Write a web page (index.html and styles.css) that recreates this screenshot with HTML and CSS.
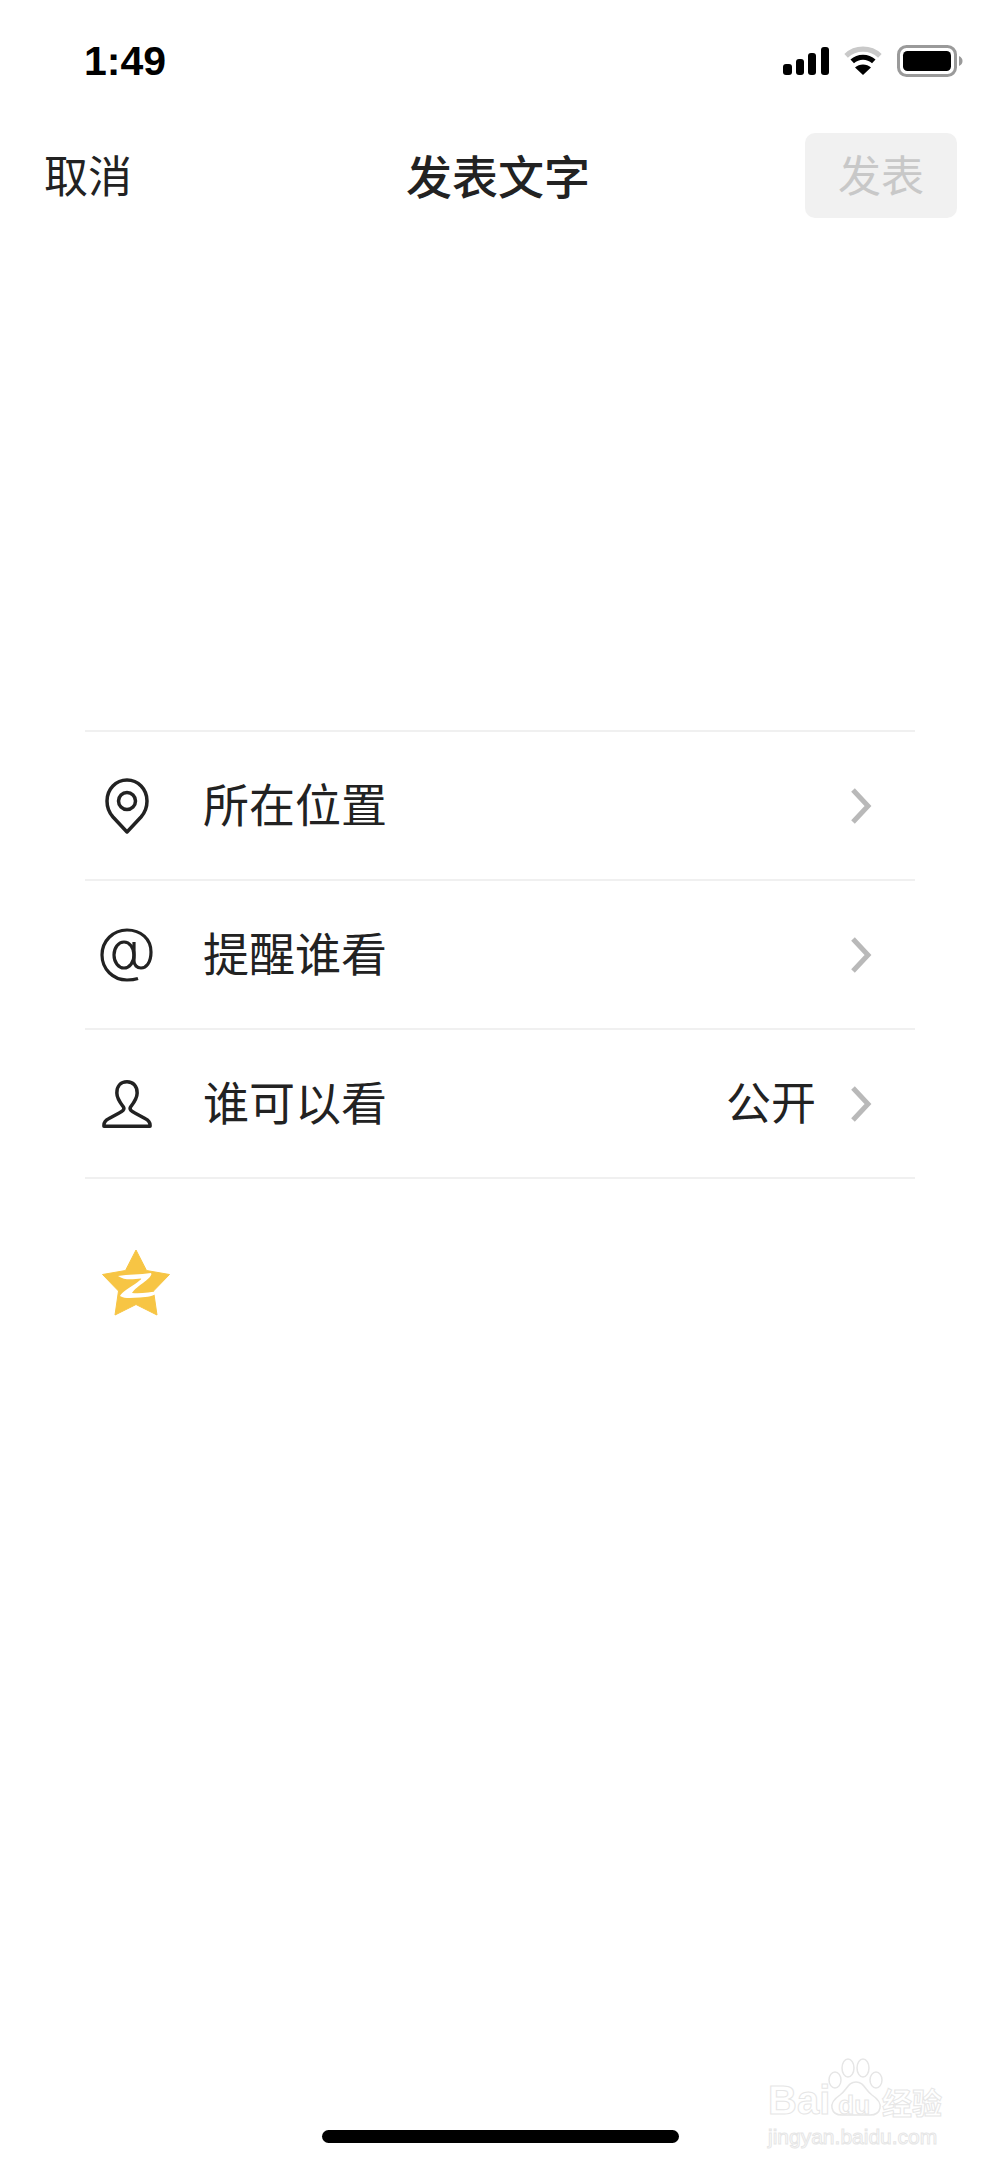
FILE: index.html
```html
<!DOCTYPE html>
<html lang="zh-CN">
<head>
    <meta charset="UTF-8">
    <title>发表文字</title>
    <link rel="stylesheet" href="styles.css">
</head>
<body>
    <div class="page">
        <div class="status-bar">
            <span class="time">1:49</span>
            <div class="status-icons">
                <svg class="signal" width="46" height="28" viewBox="0 0 46 28">
                    <rect x="0" y="17" width="9" height="11" rx="3"/>
                    <rect x="13" y="12" width="8" height="16" rx="3"/>
                    <rect x="25" y="6" width="8" height="22" rx="3"/>
                    <rect x="38" y="0" width="8" height="28" rx="3"/>
                </svg>
                <svg class="wifi" width="40" height="30" viewBox="0 0 42 32">
                    <path d="M3 10.500C13 1 29 1 39 10.500" fill="none" stroke="#c9c9c9" stroke-width="5.500"/>
                    <path d="M9.500 16.500C16 10.500 26 10.500 32.500 16.500" fill="none" stroke="#000" stroke-width="5.500"/>
                    <path d="M21 31L12.500 23C17 18.500 25 18.500 29.500 23Z" fill="#000"/>
                </svg>
                <svg class="battery" width="66" height="32" viewBox="0 0 66 32">
                    <rect x="1.500" y="1.500" width="57" height="29" rx="8" fill="none" stroke="#9a9a9a" stroke-width="3"/>
                    <rect x="6" y="6" width="48" height="20" rx="4.500" fill="#000"/>
                    <path d="M62 11C64.500 12 65.500 14 65.500 16C65.500 18 64.500 20 62 21Z" fill="#9a9a9a"/>
                </svg>
            </div>
        </div>

        <div class="nav-bar">
            <span class="nav-cancel">取消</span>
            <span class="nav-title">发表文字</span>
            <button class="nav-publish">发表</button>
        </div>

        <ul class="option-list">
            <li class="option-row">
                <span class="option-icon">
                    <svg width="44" height="56" viewBox="0 0 44 56" fill="none" stroke="#222" stroke-width="3.500">
                        <path d="M22 54L8 39C4 34.500 2 29 2 23C2 11 11 2 22 2C33 2 42 11 42 23C42 29 40 34.500 36 39Z" stroke-linejoin="round"/>
                        <circle cx="22" cy="23" r="8.500"/>
                    </svg>
                </span>
                <span class="option-label">所在位置</span>
                <svg class="chevron" width="22" height="36" viewBox="0 0 22 36"><path d="M3 2L18 18L3 34"/></svg>
            </li>
            <li class="option-row">
                <span class="option-icon">
                    <svg width="54" height="54" viewBox="0 0 54 54" fill="none" stroke="#222" stroke-width="3.200">
                        <path d="M38 50.500C35 51.500 31 52 27 52C13 52 2 41 2 27C2 13 13 2 27 2C41 2 51 11 51 24C51 35 46 40 41 40C37 40 34 37 34 33V14"/>
                        <ellipse cx="24" cy="27" rx="10" ry="13"/>
                    </svg>
                </span>
                <span class="option-label">提醒谁看</span>
                <svg class="chevron" width="22" height="36" viewBox="0 0 22 36"><path d="M3 2L18 18L3 34"/></svg>
            </li>
            <li class="option-row">
                <span class="option-icon">
                    <svg width="50" height="48" viewBox="0 0 54 52" fill="none" stroke="#222" stroke-width="3.800">
                        <path d="M27 2C20 2 16 7 16 14C16 20 20 25 23 29C25 32 22 34 18 36L7 42C3 44 2 46 2 49V50H52V49C52 46 51 44 47 42L36 36C32 34 29 32 31 29C34 25 38 20 38 14C38 7 34 2 27 2Z" stroke-linejoin="round"/>
                    </svg>
                </span>
                <span class="option-label">谁可以看</span>
                <span class="option-value">公开</span>
                <svg class="chevron" width="22" height="36" viewBox="0 0 22 36"><path d="M3 2L18 18L3 34"/></svg>
            </li>
        </ul>

        <div class="share-row">
            <svg width="68" height="66" viewBox="0 0 68 66">
                <path d="M34 0L44.500 20.500L67.500 24.500L51.500 41L55 65L34 54.500L13 65L16.500 41L0.500 24.500L23.500 20.500Z" fill="#f7c544" stroke="#f7c544" stroke-linejoin="round"/>
                <path d="M16 26C26 24 38 25 49 23C51 25 45 30 41 33C35 37 31 41 30 43C39 44 48 42 57 41C52 47 45 47 38 47.500C30 48 23 49 18 46C20 42 27 38 33 34C37 31 40 29 39 28.500C32 29 23 31 16 26Z" fill="#fff"/>
            </svg>
        </div>

        <div class="home-indicator"></div>

        <div class="watermark">
            <svg class="watermark-paw" width="56" height="58" viewBox="0 0 56 58" fill="#fff" stroke="#e6e6e6" stroke-width="1.500">
                <ellipse cx="7" cy="22" rx="6" ry="8"/>
                <ellipse cx="20" cy="10" rx="6" ry="9"/>
                <ellipse cx="35" cy="10" rx="6" ry="9"/>
                <ellipse cx="48" cy="22" rx="6" ry="8"/>
                <path d="M28 24C20 24 19 32 12 37C6 41 3 45 4 50C5 55 9 57 14 57H42C47 57 51 55 52 50C53 45 50 41 44 37C37 32 36 24 28 24Z"/>
            </svg>
            <div class="watermark-top">
                <span>Bai</span>
                <span class="watermark-du">du</span>
                <span class="watermark-cn">经验</span>
            </div>
            <div class="watermark-url">jingyan.baidu.com</div>
        </div>
    </div>
</body>
</html>
```
FILE: styles.css
```css
* {
    box-sizing: border-box;
}

body {
    margin: 0;
    background-color: #fff;
    font-family: "Liberation Sans", "Noto Sans CJK SC", sans-serif;
    color: #222;
}

.page {
    position: relative;
    height: 2165px;
    overflow: hidden;
}

/* status bar */
.status-bar {
    display: flex;
    justify-content: space-between;
    align-items: center;
    height: 60px;
    margin-top: 31px;
    padding: 0 37px 0 84px;
}

.time {
    font-size: 41px;
    font-weight: bold;
    color: #000;
}

.status-icons {
    display: flex;
    align-items: center;
    gap: 14px;
}

.signal {
    fill: #000;
}

/* nav */
.nav-bar {
    display: flex;
    justify-content: space-between;
    align-items: center;
    height: 85px;
    margin-top: 42px;
    padding: 0 43px 0 44px;
    position: relative;
}

.nav-cancel {
    font-size: 44px;
    line-height: 1;
    padding-top: 4px;
}

.nav-title {
    font-size: 46px;
    font-weight: 500;
    line-height: 1;
    padding-top: 4px;
    position: absolute;
    left: 406px;
}

.nav-publish {
    width: 152px;
    height: 85px;
    border: none;
    border-radius: 10px;
    background-color: #f1f1f1;
    color: #c8c8c8;
    font-family: inherit;
    font-size: 43px;
    line-height: 1;
    padding: 4px 0 0;
}

/* options */
.option-list {
    list-style: none;
    margin: 512px 85px 0;
    padding: 0;
    border-top: 2px solid #f0f0f0;
}

.option-row {
    display: flex;
    align-items: center;
    height: 149px;
    padding-right: 43px;
    border-bottom: 2px solid #f0f0f0;
}

.option-icon {
    display: flex;
    justify-content: center;
    width: 84px;
    margin-right: 34px;
}

.option-label {
    font-size: 46px;
    line-height: 1;
    padding-top: 1px;
    flex-grow: 1;
}

.option-value {
    font-size: 45px;
    line-height: 1;
    padding-top: 1px;
    margin-right: 34px;
}

.chevron {
    fill: none;
    stroke: #b9b9b9;
    stroke-width: 5;
}

.share-row {
    margin: 71px 0 0 102px;
}

.home-indicator {
    position: absolute;
    left: 322px;
    top: 2130px;
    width: 357px;
    height: 13px;
    border-radius: 7px;
    background-color: #000;
}

/* watermark sits over the page */
.watermark {
    position: absolute;
    left: 768px;
    top: 2056px;
    width: 190px;
    color: #fff;
    -webkit-text-stroke: 1px #e6e6e6;
}

.watermark-paw {
    position: absolute;
    left: 60px;
    top: 2px;
}

.watermark-top {
    position: relative;
    display: flex;
    align-items: baseline;
    padding-top: 25px;
    font-size: 40px;
    font-weight: bold;
    line-height: 38px;
}

.watermark-du {
    font-size: 26px;
    margin: 0 12px 0 8px;
}

.watermark-cn {
    font-size: 30px;
}

.watermark-url {
    font-size: 21px;
    line-height: 26px;
    white-space: nowrap;
}
```
